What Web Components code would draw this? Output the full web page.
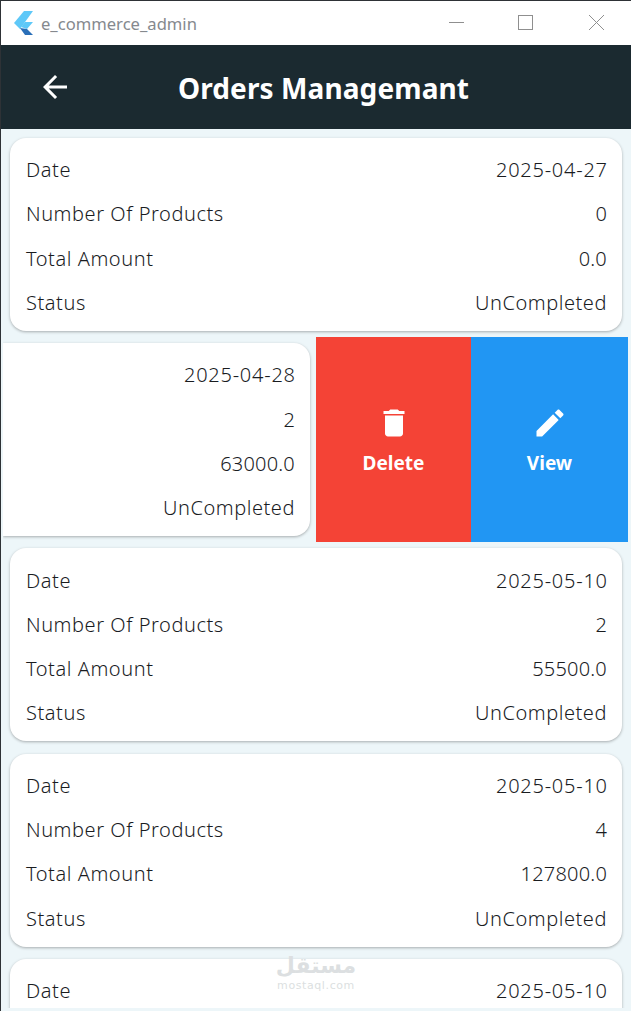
<!DOCTYPE html>
<html>
<head>
<meta charset="utf-8">
<title>e_commerce_admin</title>
<style>
  html, body { margin: 0; height: 100%; overflow: hidden; }
  body { background: #edf6f9; font-family: "Noto Sans", "Open Sans", sans-serif; }
</style>
</head>
<body>
<app-window>
  <title-bar>e_commerce_admin</title-bar>
  <app-bar>Orders Managemant</app-bar>
  <order-list>
    <order-card date="2025-04-27" products="0" amount="0.0" status="UnCompleted"></order-card>
    <swipe-row>
      <order-card slid date="2025-04-28" products="2" amount="63000.0" status="UnCompleted"></order-card>
    </swipe-row>
    <order-card date="2025-05-10" products="2" amount="55500.0" status="UnCompleted"></order-card>
    <order-card date="2025-05-10" products="4" amount="127800.0" status="UnCompleted"></order-card>
    <order-card date="2025-05-10"></order-card>
  </order-list>
  <water-mark></water-mark>
</app-window>

<script>
class AppWindow extends HTMLElement {
  constructor() {
    super()
    this.attachShadow({ mode: "open" })
    this.shadowRoot.innerHTML = `
      <style>
        :host { display: flex; flex-direction: column; height: 1011px; overflow: hidden; position: relative;
          border-top: 1px solid #2e3236; border-left: 1px solid #2e3236; box-sizing: border-box; padding-bottom: 3px; }
      </style>
      <slot></slot>`
  }
}

class TitleBar extends HTMLElement {
  constructor() {
    super()
    this.attachShadow({ mode: "open" })
    this.shadowRoot.innerHTML = `
      <style>
        :host { display: flex; align-items: center; height: 44px; flex: none; background: #fff; }
        .logo { width: 20px; height: 24px; margin-left: 13px; flex: none; }
        .name { margin-left: 7px; font: 16.6px "Noto Sans", sans-serif; color: #85898e; flex: 1; }
        .btns { display: flex; align-items: center; margin: 0 27px 1px 0; }
        .btns svg + svg { margin-left: 54px; }
        .btns svg + svg + svg { margin-left: 56px; }
        svg { display: block; }
      </style>
      <svg class="logo" viewBox="0 0 20 24">
        <path d="M10 0H19L6 18L0 12Z" fill="#5ec8f8"/>
        <path d="M11 11H19L13 18L7 16Z" fill="#5ec8f8"/>
        <path d="M6 17L11 24H19L13 18Z" fill="#2a6fb8"/>
      </svg>
      <span class="name"><slot></slot></span>
      <div class="btns">
        <svg width="15" height="15" viewBox="0 0 15 15"><path d="M0 7.5H15" stroke="#8f8f8f" fill="none"/></svg>
        <svg width="15" height="15" viewBox="0 0 15 15"><rect x=".5" y=".5" width="14" height="14" stroke="#8f8f8f" fill="none"/></svg>
        <svg width="15" height="15" viewBox="0 0 15 15"><path d="M0 0L15 15M15 0L0 15" stroke="#8f8f8f" fill="none"/></svg>
      </div>`
  }
}

class AppBar extends HTMLElement {
  constructor() {
    super()
    this.attachShadow({ mode: "open" })
    this.shadowRoot.innerHTML = `
      <style>
        :host { display: flex; align-items: center; height: 84px; flex: none; background: #1b2a30; color: #fff; }
        svg { width: 36px; height: 36px; margin-left: 36px; flex: none; }
        h1 { margin: 0 0 0 105px; padding-top: 2px; font: 700 28px "Noto Sans", sans-serif; letter-spacing: .1px; white-space: nowrap; }
      </style>
      <svg viewBox="0 0 24 24"><path fill="#fff" d="M20 11H7.83l5.59-5.59L12 4l-8 8 8 8 1.41-1.41L7.83 13H20v-2z"/></svg>
      <h1><slot></slot></h1>`
  }
}

class OrderList extends HTMLElement {
  constructor() {
    super()
    this.attachShadow({ mode: "open" })
    this.shadowRoot.innerHTML = `
      <style>
        :host { display: flex; flex-direction: column; gap: 12.3px; padding: 8.7px 9px 0 9px; flex: 1; min-height: 0; overflow: hidden; }
      </style>
      <slot></slot>`
  }
}

class OrderCard extends HTMLElement {
  constructor() {
    super()
    this.attachShadow({ mode: "open" })
  }
  connectedCallback() {
    const rows = [
      ["Date", this.getAttribute("date"), "date"],
      ["Number Of Products", this.getAttribute("products"), "num"],
      ["Total Amount", this.getAttribute("amount"), "num"],
      ["Status", this.getAttribute("status"), ""]
    ].filter(r => r[1])
    const slid = this.hasAttribute("slid")
    this.shadowRoot.innerHTML = `
      <style>
        :host { display: block; flex: none; background: #fff; border-radius: 16px; height: 193px; box-sizing: border-box;
          padding: 9.6px 15px 10px 16px; box-shadow: 0 1px 3px rgba(0,0,0,.3); color: #1a1c1f;
          font: 300 20px "Noto Sans", sans-serif; letter-spacing: .55px; }
        :host([slid]) { border-radius: 0 16px 16px 0; }
        .row { display: flex; justify-content: space-between; align-items: center; height: 44.3px; white-space: nowrap; }
        .date { letter-spacing: .75px; margin-right: -.75px; }
        .num { letter-spacing: .2px; }
      </style>
      ${rows.map(r => `<div class="row"><span>${slid ? "" : r[0]}</span><span class="${r[2]}">${r[1]}</span></div>`).join("")}`
  }
}

class SwipeRow extends HTMLElement {
  constructor() {
    super()
    this.attachShadow({ mode: "open" })
    this.shadowRoot.innerHTML = `
      <style>
        :host { display: flex; height: 205.3px; margin: -6.15px -7px -6.15px -7px; flex: none; align-items: center; overflow: hidden; }
        .card { width: 307px; flex: none; margin-right: 6px; padding: 6px 0 6px 0; overflow: hidden; padding-right: 3px; box-sizing: content-box; }
        .action { display: flex; flex-direction: column; align-items: center; justify-content: center; height: 100%;
          color: #fff; font: 700 19px "Noto Sans", sans-serif; gap: 9px; flex: none; box-sizing: border-box; padding-top: 2px; }
        .del { width: 155px; background: #f44336; margin-left: -3px; }
        .view { width: 157px; background: #2196f3; }
        svg { width: 36px; height: 36px; display: block; }
      </style>
      <div class="card"><slot></slot></div>
      <div class="action del">
        <svg viewBox="0 0 24 24"><path fill="#fff" d="M6 19c0 1.1.9 2 2 2h8c1.1 0 2-.9 2-2V7H6v12zM19 4h-3.5l-1-1h-5l-1 1H5v2h14V4z"/></svg>
        <span>Delete</span>
      </div>
      <div class="action view">
        <svg viewBox="0 0 24 24"><path fill="#fff" d="M3 17.25V21h3.75L17.81 9.94l-3.75-3.75L3 17.25zM20.71 7.04c.39-.39.39-1.02 0-1.41l-2.34-2.34c-.39-.39-1.02-.39-1.41 0l-1.83 1.83 3.75 3.75 1.83-1.83z"/></svg>
        <span>View</span>
      </div>`
  }
}

class WaterMark extends HTMLElement {
  constructor() {
    super()
    this.attachShadow({ mode: "open" })
    this.shadowRoot.innerHTML = `
      <style>
        :host { position: absolute; left: 276px; top: 951px; width: 78px; display: flex; flex-direction: column; align-items: center;
          color: #dcdfe1; font-family: "DejaVu Sans", sans-serif; pointer-events: none; }
        .ar { font-size: 22px; font-weight: 700; line-height: 28px; direction: rtl; }
        .la { font-size: 11px; line-height: 11px; letter-spacing: .6px; }
      </style>
      <span class="ar">مستقل</span>
      <span class="la">mostaql.com</span>`
  }
}

customElements.define("app-window", AppWindow)
customElements.define("title-bar", TitleBar)
customElements.define("app-bar", AppBar)
customElements.define("order-list", OrderList)
customElements.define("order-card", OrderCard)
customElements.define("swipe-row", SwipeRow)
customElements.define("water-mark", WaterMark)
</script>
</body>
</html>
